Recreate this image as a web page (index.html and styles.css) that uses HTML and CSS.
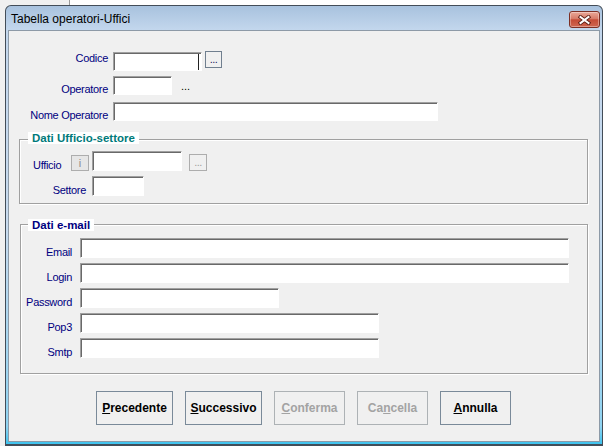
FILE: index.html
```html
<!DOCTYPE html>
<html lang="it">
<head>
<meta charset="utf-8">
<title>Tabella operatori-Uffici</title>
<link rel="stylesheet" href="styles.css">
</head>
<body>
<div class="window">
  <div class="titlebar">
    <span class="title">Tabella operatori-Uffici</span>
    <span class="close">
      <svg width="13" height="10" viewBox="0 0 13 10">
        <path d="M2.5 2 L10.5 8 M10.5 2 L2.5 8" stroke="#5a1c12" stroke-width="3.8" stroke-linecap="square" fill="none"/>
        <path d="M2.5 2 L10.5 8 M10.5 2 L2.5 8" stroke="#ffffff" stroke-width="2" stroke-linecap="square" fill="none"/>
      </svg>
    </span>
  </div>
  <div class="client">
    <div class="top-rows">
      <div class="row">
        <span class="lbl lbl-top lbl-raise">Codice</span>
        <div class="tb w-codice caret"></div>
        <span class="dots">...</span>
      </div>
      <div class="row r2">
        <span class="lbl lbl-top">Operatore</span>
        <div class="tb w-oper"></div>
        <span class="ellipsis">...</span>
      </div>
      <div class="row r3">
        <span class="lbl lbl-top">Nome Operatore</span>
        <div class="tb w-nome"></div>
      </div>
    </div>

    <div class="group g1">
      <span class="legend teal">Dati Ufficio-settore</span>
      <div class="row r-uff">
        <span class="lbl lbl-uff">Ufficio</span>
        <span class="ibtn">i</span>
        <div class="tb w-uff"></div>
        <span class="dots dis">...</span>
      </div>
      <div class="row r-set">
        <span class="lbl lbl-set">Settore</span>
        <div class="tb w-set"></div>
      </div>
    </div>

    <div class="group g2">
      <span class="legend navy">Dati e-mail</span>
      <div class="row first"><span class="lbl lbl-mail">Email</span><div class="tb tb20 w-long"></div></div>
      <div class="row"><span class="lbl lbl-mail">Login</span><div class="tb tb20 w-long"></div></div>
      <div class="row"><span class="lbl lbl-mail">Password</span><div class="tb tb20 w-pwd"></div></div>
      <div class="row"><span class="lbl lbl-mail">Pop3</span><div class="tb tb20 w-mid"></div></div>
      <div class="row"><span class="lbl lbl-mail">Smtp</span><div class="tb tb20 w-mid"></div></div>
    </div>

    <div class="buttons">
      <button class="btn wide"><u>P</u>recedente</button>
      <button class="btn wide"><u>S</u>uccessivo</button>
      <button class="btn disabled"><u>C</u>onferma</button>
      <button class="btn disabled">Ca<u>n</u>cella</button>
      <button class="btn"><u>A</u>nnulla</button>
    </div>
  </div>
</div>
</body>
</html>
```

FILE: styles.css
```css
* { box-sizing: border-box; }

html, body {
  margin: 0;
  height: 100%;
}

body {
  background: linear-gradient(to right, #f0f0f0 0, #f0f0f0 69px, #9a9a9a 69px, #9a9a9a 70px, #ffffff 70px);
  font-family: "Liberation Sans", Arial, sans-serif;
  overflow: hidden;
}

.window {
  margin: 5px 0 0 5px;
  width: 598px;
  height: 441px;
  border: 1px solid #434d58;
  border-bottom-width: 2px;
  border-radius: 6px 6px 0 0;
  background: linear-gradient(to bottom, #a8c2de 0, #c3d7ed 24px, #c8dbef 50%, #8fd3f1 96%, #3ec3ee 100%);
  padding: 0 2px 2px 2px;
  display: flex;
  flex-direction: column;
}

.titlebar {
  height: 24px;
  display: flex;
  justify-content: space-between;
  align-items: flex-start;
  flex: none;
}

.title {
  font-size: 12px;
  line-height: 14px;
  padding: 6px 0 0 3px;
  color: #000;
}

.close {
  margin-top: 5px;
  width: 31px;
  height: 17px;
  border: 1px solid #7c2f24;
  border-radius: 3px;
  background: linear-gradient(to bottom, #e9a898 0, #d77b68 45%, #c44b36 52%, #cf6650 100%);
  box-shadow: inset 0 0 0 1px rgba(255, 255, 255, 0.35);
  display: flex;
  align-items: center;
  justify-content: center;
}

.client {
  flex: 1;
  border: 1px solid #8d9aa7;
  background: #f0f0f0;
}

/* generic rows */
.row {
  display: flex;
  align-items: flex-end;
}

.lbl {
  font-size: 11px;
  line-height: 13px;
  letter-spacing: -0.3px;
  color: #000080;
  margin-bottom: -1px;
  white-space: nowrap;
}

.tb {
  height: 19px;
  background: #fff;
  border-top: 1px solid #a0a0a0;
  border-left: 1px solid #a0a0a0;
  border-right: 1px solid #ffffff;
  border-bottom: 1px solid #ffffff;
  box-shadow: inset 1px 1px 0 #696969;
}

.tb20 { height: 20px; }

.caret {
  box-shadow: inset 1px 1px 0 #696969, inset -2px 0 0 #ffffff, inset -3px 0 0 #222222;
}

/* top section */
.top-rows {
  margin-top: 21px;
}

.lbl-top {
  width: 99px;
  text-align: right;
  margin-right: 5px;
}

.lbl-raise {
  align-self: flex-start;
  margin-bottom: 0;
}

.w-codice { width: 89px; }
.w-oper { width: 59px; }
.w-nome { width: 325px; }

.r2 { margin-top: 5px; }
.r3 { margin-top: 7px; }
.r3 .tb { height: 19px; }

.dots {
  margin-left: 3px;
  align-self: flex-start;
  margin-top: -1px;
  width: 17px;
  height: 17px;
  border: 1px solid #707f8f;
  background: #f0f0f0;
  font-size: 11px;
  line-height: 11px;
  color: #1a1a60;
  display: flex;
  align-items: flex-end;
  justify-content: center;
  padding-bottom: 2px;
  letter-spacing: -0.5px;
}

.dots.dis {
  margin-left: 7px;
  align-self: flex-end;
  margin-top: 0;
  margin-bottom: 0;
  width: 18px;
  border-color: #adadad;
  color: #a0a0a0;
}

.ellipsis {
  margin-left: 9px;
  margin-bottom: 3px;
  font-size: 11px;
  line-height: 11px;
  color: #000;
}

/* group boxes */
.group {
  position: relative;
  border: 1px solid #a0a0a0;
  box-shadow: 1px 1px 0 #ffffff, inset 1px 1px 0 #ffffff;
}

.legend {
  position: absolute;
  font-weight: bold;
  font-size: 11.5px;
  line-height: 12px;
  padding: 0 4px;
  background: #ffffff;
  white-space: nowrap;
}

.teal { color: #007a7a; }
.navy { color: #000080; }

.g1 {
  margin: 18px 0 0 10px;
  width: 569px;
  height: 65px;
  padding-top: 11px;
}

.g1 .legend { top: -8px; left: 8px; }

.lbl-uff {
  width: 51px;
  padding-left: 13px;
}

.ibtn {
  width: 18px;
  height: 16px;
  border: 1px solid #adadad;
  background: #e6e6e6;
  color: #8c8c8c;
  font-size: 11px;
  line-height: 14px;
  text-align: center;
  margin-right: 3px;
}

.w-uff { width: 90px; height: 20px; }

.r-set { margin-top: 5px; }

.lbl-set {
  width: 72px;
  text-align: right;
  padding-right: 6px;
}

.w-set { width: 52px; height: 20px; }

.g2 {
  margin: 20px 0 0 11px;
  width: 568px;
  height: 150px;
  padding-top: 13px;
}

.g2 .legend { top: -6px; left: 7px; }

.g2 .row + .row { margin-top: 5px; }

.lbl-mail {
  width: 51px;
  text-align: right;
  margin-right: 8px;
}

.w-long { width: 489px; }
.w-pwd { width: 199px; }
.w-mid { width: 299px; }

/* bottom buttons */
.buttons {
  display: flex;
  gap: 12px;
  margin: 17px 0 0 87px;
}

.btn {
  width: 71px;
  height: 34px;
  padding: 0;
  border: 1px solid #7a8a99;
  background: #f0f0f0;
  font-family: "Liberation Sans", Arial, sans-serif;
  font-weight: bold;
  font-size: 12px;
  color: #000;
  border-radius: 0;
}

.btn.wide { width: 77px; }

.btn.disabled {
  border-color: #adb2b5;
  color: #a3a3a3;
}
```
